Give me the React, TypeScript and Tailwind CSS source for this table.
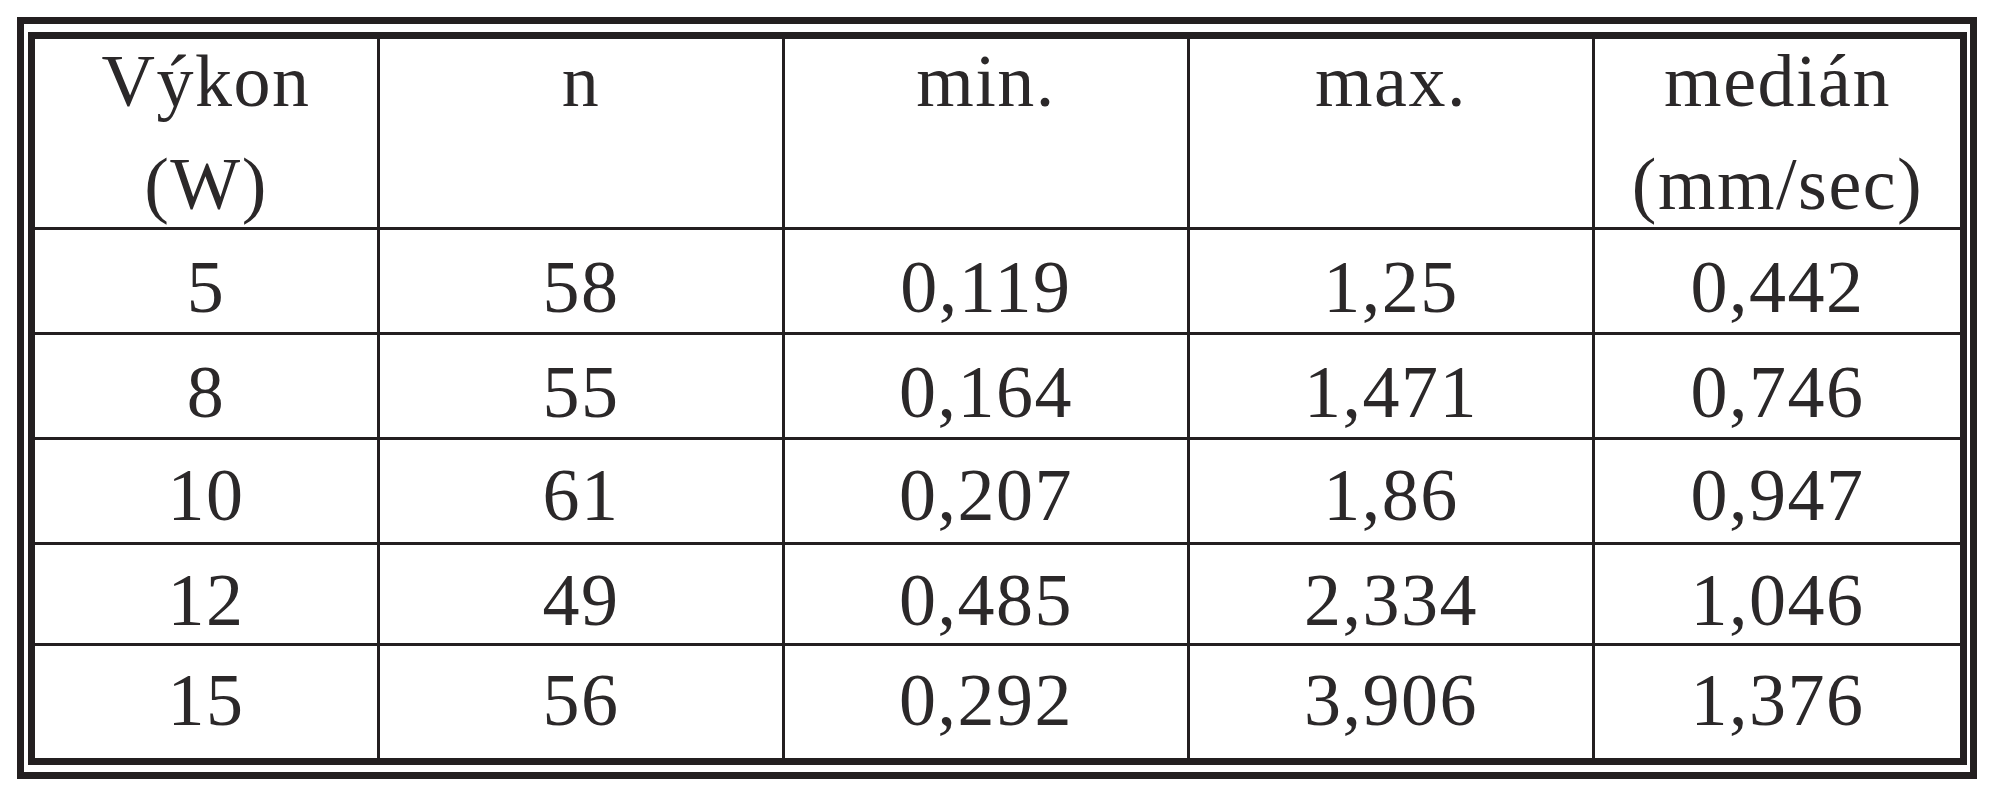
import React from "react";

const rows: { h: string; pt: string; cells: string[] }[] = [
  { h: "h-[105px]", pt: "pt-[20px]", cells: ["5", "58", "0,119", "1,25", "0,442"] },
  { h: "h-[105px]", pt: "pt-[20px]", cells: ["8", "55", "0,164", "1,471", "0,746"] },
  { h: "h-[105px]", pt: "pt-[18px]", cells: ["10", "61", "0,207", "1,86", "0,947"] },
  { h: "h-[101px]", pt: "pt-[18px]", cells: ["12", "49", "0,485", "2,334", "1,046"] },
  { h: "h-[112px]", pt: "pt-[17px]", cells: ["15", "56", "0,292", "3,906", "1,376"] },
];

const widths = ["w-[342px]", "w-[405px]", "w-[405px]", "w-[405px]", "flex-1"];

const header: [string, string][] = [
  ["Výkon", "(W)"],
  ["n", "\u00a0"],
  ["min.", "\u00a0"],
  ["max.", "\u00a0"],
  ["medián", "(mm/sec)"],
];

export default function App() {
  return (
    <div
      className="w-[1991px] h-[800px] bg-white text-[#2b2829] overflow-hidden"
      style={{ fontFamily: '"Liberation Serif", "Times New Roman", serif' }}
    >
      <div className="ml-[17px] mt-[17px] w-[1960px] h-[762px] border-[7px] border-[#231f20] pl-[4px] pr-[3px] pt-[8px] pb-[7px]">
        <div className="w-full h-full border-[7px] border-[#231f20] flex flex-col">
          <div className="flex h-[191px] shrink-0 border-b-[3px] border-[#231f20]">
            {header.map(([a, b], i) => (
              <div
                key={i}
                className={`${widths[i]} ${i > 0 ? "border-l-[3px] border-[#231f20]" : ""} flex items-center justify-center overflow-visible`}
              >
                <div className="text-[74px] leading-[103px] tracking-[1.5px] text-center whitespace-nowrap">
                  <div>{a}</div>
                  <div>{b}</div>
                </div>
              </div>
            ))}
          </div>
          {rows.map((r, ri) => (
            <div
              key={ri}
              className={`flex shrink-0 ${r.h} ${ri < rows.length - 1 ? "border-b-[3px] border-[#231f20]" : ""}`}
            >
              {r.cells.map((c, i) => (
                <div
                  key={i}
                  className={`${widths[i]} ${i > 0 ? "border-l-[3px] border-[#231f20]" : ""} ${r.pt} text-center text-[74px] leading-[74px] tracking-[1.5px]`}
                >
                  {c}
                </div>
              ))}
            </div>
          ))}
        </div>
      </div>
    </div>
  );
}
